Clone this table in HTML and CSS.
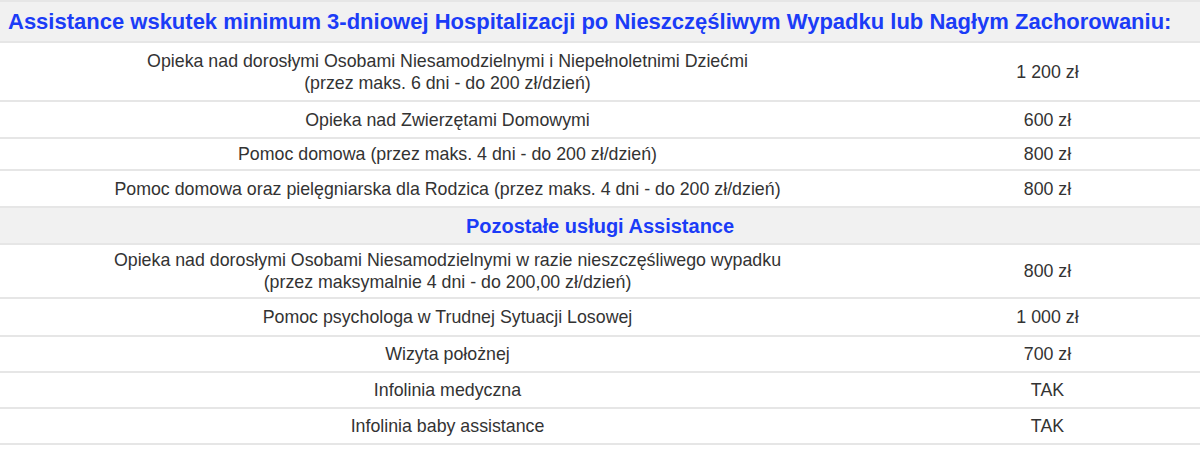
FILE: index.html
```html
<!DOCTYPE html>
<html>
<head>
<meta charset="UTF-8">
<title>Assistance</title>
<link rel="stylesheet" href="styles.css">
</head>
<body>
<table class="tab">
	<tr class="head">
		<th colspan="2" class="head_main">Assistance wskutek minimum 3-dniowej Hospitalizacji po Nieszczęśliwym Wypadku lub Nagłym Zachorowaniu:</th>
	</tr>
	<tr class="r_big">
		<td class="name">Opieka nad dorosłymi Osobami Niesamodzielnymi i Niepełnoletnimi Dziećmi<br>(przez maks. 6 dni - do 200 zł/dzień)</td>
		<td class="val">1 200 zł</td>
	</tr>
	<tr class="r_mid">
		<td class="name">Opieka nad Zwierzętami Domowymi</td>
		<td class="val">600 zł</td>
	</tr>
	<tr class="r_low">
		<td class="name">Pomoc domowa (przez maks. 4 dni - do 200 zł/dzień)</td>
		<td class="val">800 zł</td>
	</tr>
	<tr class="r_mid">
		<td class="name">Pomoc domowa oraz pielęgniarska dla Rodzica (przez maks. 4 dni - do 200 zł/dzień)</td>
		<td class="val">800 zł</td>
	</tr>
	<tr class="head">
		<th colspan="2" class="head_sub">Pozostałe usługi Assistance</th>
	</tr>
	<tr class="r_two">
		<td class="name">Opieka nad dorosłymi Osobami Niesamodzielnymi w razie nieszczęśliwego wypadku<br>(przez maksymalnie 4 dni - do 200,00 zł/dzień)</td>
		<td class="val">800 zł</td>
	</tr>
	<tr class="r_tall">
		<td class="name">Pomoc psychologa w Trudnej Sytuacji Losowej</td>
		<td class="val">1 000 zł</td>
	</tr>
	<tr class="r_one">
		<td class="name">Wizyta położnej</td>
		<td class="val">700 zł</td>
	</tr>
	<tr class="r_one">
		<td class="name">Infolinia medyczna</td>
		<td class="val">TAK</td>
	</tr>
	<tr class="r_one">
		<td class="name">Infolinia baby assistance</td>
		<td class="val">TAK</td>
	</tr>
</table>
</body>
</html>
```
FILE: styles.css
```css
*{margin: 0;padding: 0;}
body{
	background: #fff;
	font-family: "Liberation Sans", Arial, sans-serif;
	color: #333;
}
.tab{
	width: 1200px;
	border-collapse: collapse;
	border-top: 2px solid #e6e6e6;
}
.tab td, .tab th{
	border-bottom: 2px solid #e6e6e6;
	font-size: 17.8px;
	line-height: 22px;
	vertical-align: middle;
}
.head th{
	background: #f1f1f1;
	color: #1b3cf7;
	font-weight: bold;
}
.head_main{
	text-align: left;
	font-size: 22px !important;
	line-height: 26px !important;
	padding: 7px 8px 6px;
}
.head_sub{
	text-align: center;
	font-size: 20px !important;
	line-height: 24px !important;
	padding: 6px 0 5px;
}
.name{
	width: 895px;
	text-align: center;
}
.val{
	text-align: center;
}
.r_big td{padding: 7px 0 6px;}
.r_two td{padding: 4px 0 4px;}
.r_mid td{padding: 7px 0 6px;}
.r_low td{padding: 4px 0 4px;}
.r_tall td{padding: 7px 0 7px;}
.r_one td{padding: 6px 0 6px;}
```
